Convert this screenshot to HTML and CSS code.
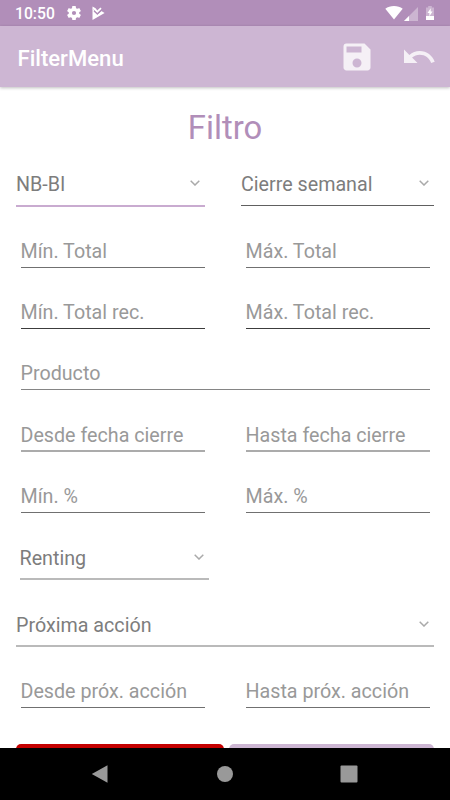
FILE: index.html
```html
<!DOCTYPE html>
<html lang="es">
<head>
  <meta charset="UTF-8" />
  <meta name="viewport" content="width=device-width, initial-scale=1.0" />
  <title>FilterMenu</title>
  <link rel="stylesheet" href="styles.css">
</head>
<body>
  <div class="screen">
    <div class="status-bar">
      <span class="clock">10:50</span>
      <svg class="icon-gear" viewBox="2 2 20 20"><path fill-rule="evenodd" d="M19.43 12.98c.04-.32.07-.64.07-.98s-.03-.66-.07-.98l2.11-1.65c.19-.15.24-.42.12-.64l-2-3.46c-.12-.22-.39-.3-.61-.22l-2.49 1c-.52-.4-1.08-.73-1.69-.98l-.38-2.65A.49.49 0 0 0 14 2h-4c-.25 0-.46.18-.49.42l-.38 2.65c-.61.25-1.17.59-1.69.98l-2.49-1c-.23-.09-.49 0-.61.22l-2 3.46c-.13.22-.07.49.12.64l2.11 1.65c-.04.32-.07.65-.07.98s.03.66.07.98l-2.11 1.65c-.19.15-.24.42-.12.64l2 3.46c.12.22.39.3.61.22l2.49-1c.52.4 1.08.73 1.69.98l.38 2.65c.03.24.24.42.49.42h4c.25 0 .46-.18.49-.42l.38-2.65c.61-.25 1.17-.59 1.69-.98l2.49 1c.23.09.49 0 .61-.22l2-3.46c.12-.22.07-.49-.12-.64l-2.11-1.65zM12 15a3 3 0 1 1 0-6 3 3 0 0 1 0 6z"/></svg>
      <svg class="icon-play" viewBox="0 0 13 14"><path d="M.5.5 3.6 2.3 5.3 4.6 8.4 1.6 9.6 2.8 5.3 7 2.4 4.2.5 3z"/><path d="M.5 2.5 5.3 8.8 9.4 4.9 12.6 7 .5 14z"/><path class="check" d="M2 5 5.3 8.1 10.8 3"/></svg>
      <div class="status-right">
        <svg class="icon-wifi" viewBox="0 0 18 14"><path d="M9 13.5.3 2.8C2.7 1 5.7 0 9 0s6.3 1 8.7 2.8z"/></svg>
        <svg class="icon-signal" viewBox="0 0 14 14"><path class="dim" d="M14 0v14H0z"/><path d="M5 9v5H0z"/></svg>
        <svg class="icon-battery" viewBox="0 0 8 14"><path class="dim" d="M0 1.4h2.2V0h3.6v1.4H8V10H0z"/><path d="M0 10h8v4H0zM4.7 2.3 1.5 6.9h1.9v3.3l3.2-4.7H4.7z"/></svg>
      </div>
    </div>

    <header class="app-bar">
      <h1>FilterMenu</h1>
      <svg class="action" viewBox="0 0 24 24"><path d="M17 3H5a2 2 0 0 0-2 2v14c0 1.1.9 2 2 2h14c1.1 0 2-.9 2-2V7l-4-4zm-5 16a3 3 0 1 1 0-6 3 3 0 0 1 0 6zm3-10H5V5h10v4z"/></svg>
      <svg class="action undo" viewBox="0 0 24 24"><path d="M12.5 8c-2.65 0-5.05.99-6.9 2.6L2 7v9h9l-3.62-3.62c1.39-1.16 3.16-1.88 5.12-1.88 3.54 0 6.55 2.31 7.6 5.5l2.37-.78C21.08 11.03 17.15 8 12.5 8z"/></svg>
    </header>

    <main class="content">
      <h2>Filtro</h2>
      <div class="row first">
        <div class="select active"><span>NB-BI</span><svg class="chevron" viewBox="0 0 10 6"><path d="M.7.7 5 5 9.3.7"/></svg></div>
        <div class="select dark"><span>Cierre semanal</span><svg class="chevron" viewBox="0 0 10 6"><path d="M.7.7 5 5 9.3.7"/></svg></div>
      </div>
      <div class="row">
        <div class="field">Mín. Total</div>
        <div class="field">Máx. Total</div>
      </div>
      <div class="row strong">
        <div class="field">Mín. Total rec.</div>
        <div class="field">Máx. Total rec.</div>
      </div>
      <div class="row product">
        <div class="field">Producto</div>
      </div>
      <div class="row soft">
        <div class="field">Desde fecha cierre</div>
        <div class="field">Hasta fecha cierre</div>
      </div>
      <div class="row">
        <div class="field">Mín. %</div>
        <div class="field">Máx. %</div>
      </div>
      <div class="row tall renting">
        <div class="select"><span>Renting</span><svg class="chevron" viewBox="0 0 10 6"><path d="M.7.7 5 5 9.3.7"/></svg></div>
      </div>
      <div class="row tall">
        <div class="select"><span>Próxima acción</span><svg class="chevron" viewBox="0 0 10 6"><path d="M.7.7 5 5 9.3.7"/></svg></div>
      </div>
      <div class="row">
        <div class="field">Desde próx. acción</div>
        <div class="field">Hasta próx. acción</div>
      </div>
      <div class="buttons">
        <div class="btn btn-red"></div>
        <div class="btn btn-purple"></div>
      </div>
    </main>

    <nav class="nav-bar">
      <svg viewBox="0 0 18 18"><path d="M.8 9 16.5.2v17.6z"/></svg>
      <svg viewBox="0 0 18 18"><circle cx="9" cy="9" r="8"/></svg>
      <svg viewBox="0 0 18 18"><rect x=".5" y=".5" width="17" height="17" rx="1"/></svg>
    </nav>
  </div>
</body>
</html>
```
FILE: styles.css
```css
:root {
  --purple-dark: #b18eb9;
  --purple: #cdb6d3;
  --text: #7d7d7d;
  --hint: #999;
}

* {
  box-sizing: border-box;
  margin: 0;
  padding: 0;
}

body {
  font-family: Roboto, sans-serif;
  background: #fff;
}

svg {
  display: block;
  flex: none;
  fill: #fff;
}

.screen {
  display: flex;
  flex-direction: column;
  width: 450px;
  height: 800px;
  overflow: hidden;
}

.status-bar {
  display: flex;
  align-items: center;
  flex: none;
  height: 26px;
  padding: 0 16px 0 15px;
  background: var(--purple-dark);
  color: #fff;
}

.clock {
  width: 52px;
  font-size: 15.7px;
  font-weight: 500;
  line-height: 26px;
  padding-top: 2px;
}

.icon-gear {
  width: 14px;
  height: 14px;
}

.icon-play {
  width: 13px;
  height: 14px;
  margin-left: 11px;
}

.icon-play .check {
  fill: none;
  stroke: var(--purple-dark);
  stroke-width: 1.1;
}

.status-right {
  display: flex;
  align-items: center;
  margin-left: auto;
}

.icon-wifi {
  width: 18px;
  height: 14px;
}

.icon-signal {
  width: 14px;
  height: 14px;
  margin: 1px 8px 0 1px;
}

.icon-battery {
  width: 8px;
  height: 14px;
}

.dim {
  opacity: 0.35;
}

.app-bar {
  display: flex;
  align-items: center;
  flex: none;
  height: 61px;
  padding: 0 13.5px 0 17.5px;
  background: var(--purple);
  box-shadow: 0 1px 3px rgba(0, 0, 0, 0.25);
  z-index: 1;
}

.app-bar h1 {
  flex: 1;
  padding-top: 2px;
  color: #fff;
  font-size: 22.1px;
  font-weight: 500;
}

.action {
  width: 36px;
  height: 36px;
  fill: #f5f0f6;
}

.undo {
  margin-left: 25.5px;
}

.content {
  flex: 1;
  min-height: 0;
  overflow: hidden;
}

.content h2 {
  height: 73px;
  padding-top: 21px;
  color: var(--purple-dark);
  font-size: 32.8px;
  font-weight: 400;
  line-height: 40px;
  text-align: center;
}

.row {
  display: flex;
  align-items: flex-end;
  gap: 41px;
  height: 61px;
  padding: 0 20.5px;
}

.field {
  flex: 1;
  height: 34px;
  border-bottom: 1px solid #707070;
  color: var(--hint);
  font-size: 19.7px;
  line-height: 35px;
  white-space: nowrap;
}

.strong .field {
  border-color: #3c3c3c;
}

.soft {
  height: 62px;
}

.soft .field {
  height: 35px;
  border-bottom: 2px solid #ababab;
  line-height: 37px;
}

.product .field {
  border-color: #858585;
}

.select {
  display: flex;
  justify-content: space-between;
  flex: 1;
  height: 40px;
  padding-right: 5px;
  border-bottom: 2px solid #bababa;
  color: var(--text);
  font-size: 19.7px;
  line-height: 35px;
}

.first {
  gap: 36px;
  height: 47px;
  padding: 0 16px;
}

.first .active {
  flex: 0 0 189px;
  border-color: #c9abd0;
}

.first .dark {
  height: 39px;
  margin-bottom: 1px;
  border-bottom: 1px solid #606060;
}

.tall {
  height: 67px;
  padding: 0 16px;
}

.tall .select {
  line-height: 37px;
}

.renting {
  padding: 0 241px 0 19.5px;
}

.chevron {
  width: 10px;
  height: 6px;
  margin-top: 13px;
  fill: none;
  stroke: #aaa;
  stroke-width: 1.5;
}

.tall .chevron {
  margin-top: 14px;
}

.buttons {
  display: flex;
  gap: 5px;
  padding: 36px 16px 0;
}

.btn {
  height: 48px;
  border-radius: 5px;
}

.btn-red {
  width: 208px;
  background: #c40000;
}

.btn-purple {
  flex: 1;
  background: var(--purple);
}

.nav-bar {
  display: flex;
  align-items: center;
  justify-content: center;
  gap: 106.5px;
  flex: none;
  height: 52px;
  padding-right: 1px;
  background: #000;
}

.nav-bar svg {
  width: 18px;
  height: 18px;
  fill: #999;
}
```
